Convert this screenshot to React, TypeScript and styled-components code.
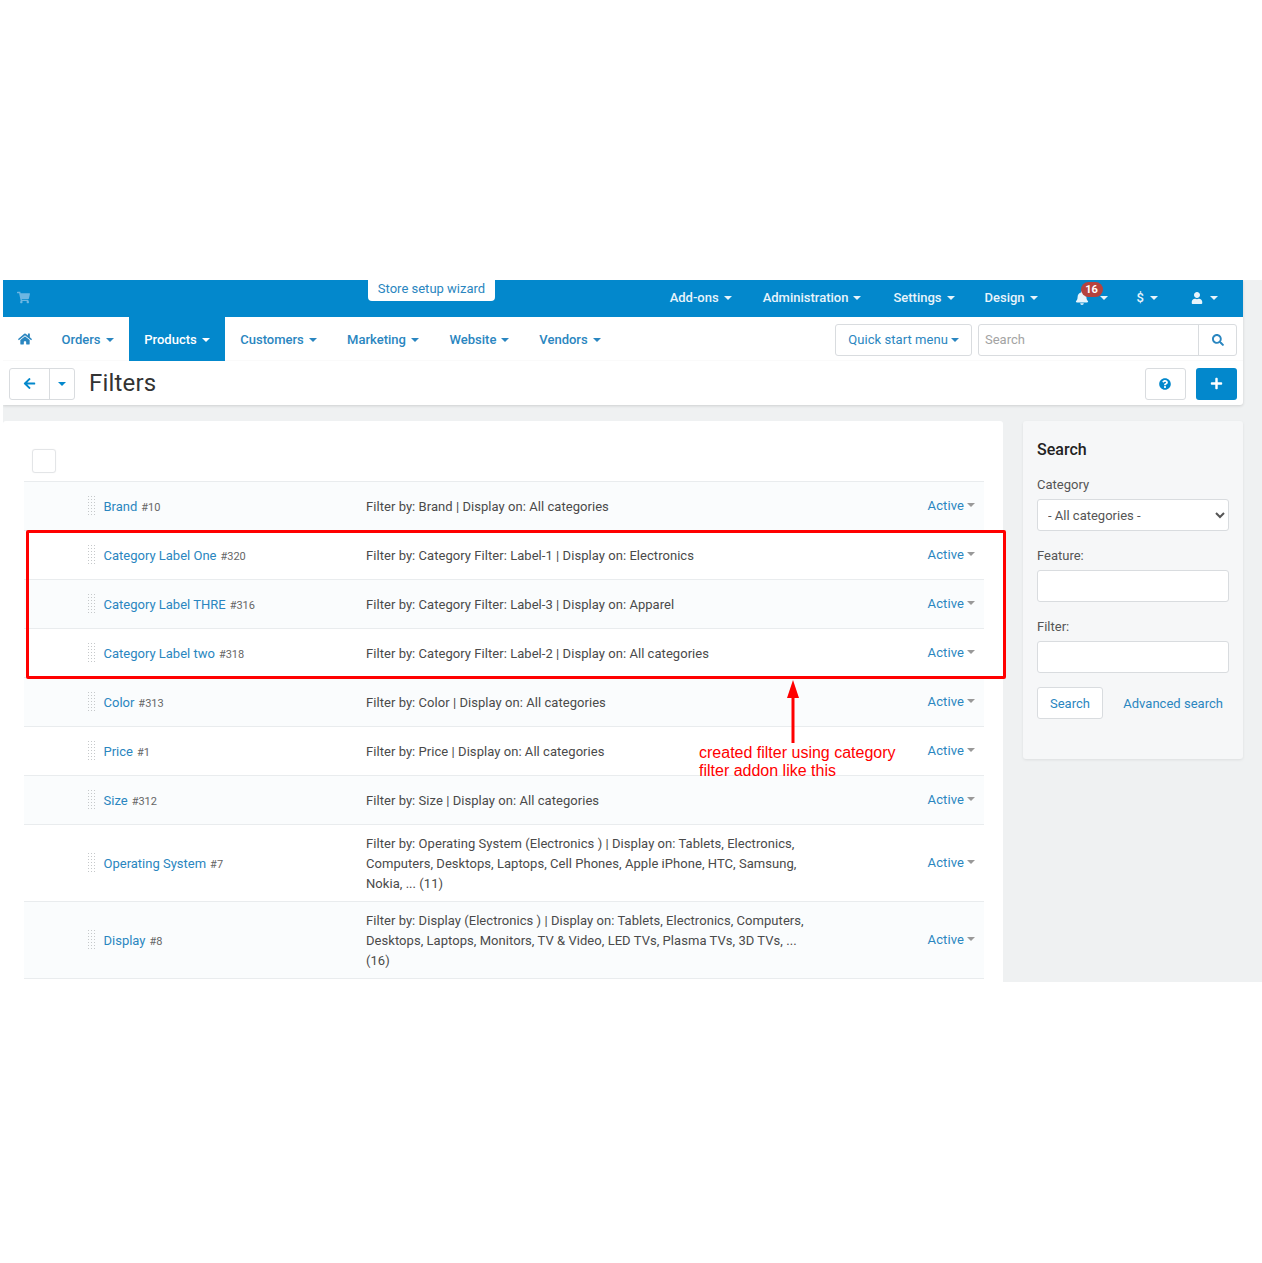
import React from "react";
import styled, { createGlobalStyle } from "styled-components";
import { FaShoppingCart, FaHome, FaArrowLeft, FaBell, FaUser, FaQuestionCircle, FaPlus, FaSearch } from "react-icons/fa";

const Global = createGlobalStyle`
  html, body { margin: 0; padding: 0; background: #fff; }
  body { min-height: 1263px; font-family: Roboto, "Liberation Sans", sans-serif; font-size: 13px; color: #444; }
  * { box-sizing: border-box; }
`;

const BLUE = "#0388cc";
const LINK = "#2a86c0";

const Frame = styled.div`
  margin: 280px 0 0 3px;
  height: 702px;
  overflow: hidden;
  background: #eff1f2;
`;
const Header = styled.header`
  width: 1240px;
  background: #fff;
  box-shadow: 0 1px 3px rgba(0,0,0,.14);
  border-radius: 0 0 3px 0;
`;
const TopBar = styled.div`
  height: 37px;
  padding-bottom: 2px;
  background: ${BLUE};
  display: flex;
  align-items: center;
  color: #fff;
  position: relative;
`;
const CartIcon = styled(FaShoppingCart)`
  margin-left: 14px;
  width: 13px;
  height: 13px;
  color: #6db6e2;
`;
const Wizard = styled.a`
  position: absolute;
  left: 365px;
  top: 0;
  width: 127px;
  height: 21px;
  background: #fff;
  color: ${LINK};
  border-radius: 0 0 4px 4px;
  text-align: center;
  font-size: 13px;
  line-height: 18px;
`;
const TopNav = styled.nav`
  margin-left: auto;
  display: flex;
  align-items: center;
  height: 100%;
  padding-right: 25px;
`;
const Caret = styled.i<{ $color?: string; $ml?: number; $up?: number }>`
  display: inline-block;
  width: 0;
  height: 0;
  margin-left: ${p => p.$ml ?? 5}px;
  margin-top: ${p => -(p.$up ?? 0)}px;
  vertical-align: middle;
  border-style: solid;
  border-width: 4px 4px 0;
  border-color: ${p => p.$color ?? "currentColor"} transparent transparent;
`;
const TopItem = styled.a<{ $ml: number }>`
  margin-left: ${p => p.$ml}px;
  font-weight: 500;
  font-size: 13px;
  color: #e8f4fb;
  white-space: nowrap;
  position: relative;
  display: flex;
  align-items: center;
`;
const Badge = styled.span`
  position: absolute;
  left: 6px;
  top: -9px;
  width: 22px;
  height: 15px;
  border-radius: 8px;
  background: #b5433f;
  color: #fff;
  font-size: 11px;
  font-weight: 700;
  line-height: 15px;
  text-align: center;
`;
const NavRow = styled.div`
  height: 44px;
  display: flex;
  align-items: center;
  position: relative;
  border-bottom: 1px solid #fafafa;
`;
const NavHome = styled(FaHome)`
  margin: 0 14px 0 15px;
  width: 14px;
  height: 14px;
  color: ${LINK};
`;
const NavItem = styled.a<{ $active?: boolean; $w: number }>`
  height: 44px;
  padding-top: 2px;
  width: ${p => p.$w}px;
  display: flex;
  align-items: center;
  justify-content: center;
  font-weight: 500;
  font-size: 13px;
  color: ${p => (p.$active ? "#fff" : LINK)};
  background: ${p => (p.$active ? BLUE : "transparent")};
`;
const NavRight = styled.div`
  margin-left: auto;
  margin-top: 2px;
  padding-right: 6px;
  display: flex;
  gap: 6px;
`;
const OutlineBtn = styled.a`
  height: 32px;
  padding: 0 12px;
  display: flex;
  align-items: center;
  background: #fff;
  border: 1px solid #d9dcdf;
  border-radius: 3px;
  color: ${LINK};
  font-size: 13px;
  white-space: nowrap;
`;
const QuickBtn = styled(OutlineBtn)`
  letter-spacing: .06px;
`;
const SearchBox = styled.div`
  width: 259px;
  height: 32px;
  display: flex;
  border: 1px solid #d9dcdf;
  border-radius: 3px;
`;
const SearchText = styled.span`
  flex: 1;
  padding-left: 6px;
  line-height: 30px;
  font-size: 13px;
  color: #a3a3a3;
`;
const SearchBtn = styled.span`
  width: 38px;
  border-left: 1px solid #d9dcdf;
  display: flex;
  align-items: center;
  justify-content: center;
  color: ${LINK};
  font-size: 12px;
`;
const TitleRow = styled.div`
  height: 44px;
  padding: 1px 6px 0;
  display: flex;
  align-items: center;
`;
const BackGroup = styled.div`
  width: 66px;
  height: 32px;
  display: flex;
  border: 1px solid #d9dcdf;
  border-radius: 3px;
  color: ${BLUE};
`;
const BackPart = styled.span<{ $w: number; $split?: boolean }>`
  width: ${p => p.$w}px;
  display: flex;
  align-items: center;
  justify-content: center;
  font-size: 13px;
  border-left: ${p => (p.$split ? "1px solid #d9dcdf" : "none")};
`;
const Title = styled.h1`
  margin: 0 0 2px 14px;
  font-size: 24px;
  font-weight: 400;
  color: #333;
  letter-spacing: .2px;
`;
const TitleActions = styled.div`
  margin-left: auto;
  display: flex;
  gap: 10px;
`;
const HelpBtn = styled.span`
  width: 41px;
  height: 32px;
  padding-right: 1px;
  border: 1px solid #d9dcdf;
  border-radius: 3px;
  display: flex;
  align-items: center;
  justify-content: center;
  color: ${BLUE};
  font-size: 12px;
`;
const AddBtn = styled.span`
  width: 41px;
  height: 32px;
  padding-right: 1px;
  border-radius: 3px;
  background: ${BLUE};
  color: #fff;
  display: flex;
  align-items: center;
  justify-content: center;
  font-size: 13px;
`;
const Content = styled.div`
  margin-top: 16px;
  display: flex;
  gap: 20px;
  align-items: flex-start;
  width: 1240px;
  position: relative;
`;
const Panel = styled.main`
  width: 1000px;
  height: 600px;
  background: #fff;
  padding: 0 19px 0 21px;
  border-radius: 3px;
`;
const ListHead = styled.div`
  height: 61px;
  padding: 28px 0 0 8px;
  border-bottom: 1px solid #e9ecee;
`;
const Check = styled.span`
  display: block;
  width: 24px;
  height: 24px;
  border: 1px solid #e3e5e7;
  border-radius: 3px;
  box-shadow: 0 0 1px rgba(0,0,0,.1);
`;
const Row = styled.div<{ $tint: boolean; $h: number }>`
  height: ${p => p.$h}px;
  display: flex;
  align-items: center;
  padding-left: 62.5px;
  background: ${p => (p.$tint ? "#fafcfd" : "#fff")};
  border-bottom: 1px solid #e9ecee;
`;
const Handle = styled.span`
  width: 8px;
  height: 20px;
  margin-right: 9px;
  margin-top: -2px;
  background-image: radial-gradient(circle, #c5c8ca 0.7px, transparent 0.8px);
  background-size: 3px 3px;
`;
const NameCell = styled.div`
  width: 262.5px;
  flex: none;
`;
const NameLink = styled.a`
  color: ${LINK};
  font-size: 13px;
`;
const NameId = styled.small`
  margin-left: 4px;
  color: #666;
  font-size: 11px;
`;
const Desc = styled.div`
  width: 450px;
  flex: none;
  margin-top: 2px;
  line-height: 20px;
  color: #4a4a4a;
  font-size: 13px;
  letter-spacing: .05px;
`;
const Status = styled.a`
  margin-left: auto;
  padding-right: 9px;
  margin-top: -1px;
  color: ${LINK};
  font-size: 13px;
  letter-spacing: .1px;
`;
const Side = styled.aside`
  width: 220px;
  height: 338px;
  padding: 19px 14px;
  background: #f6f7f8;
  border-radius: 3px;
  box-shadow: 0 1px 3px rgba(0,0,0,.08);
`;
const SideTitle = styled.h3`
  margin: 0 0 16px;
  font-size: 16px;
  line-height: 20px;
  font-weight: 500;
  color: #222;
`;
const Label = styled.div`
  font-size: 13px;
  line-height: 18px;
  margin-bottom: 5px;
  color: #555;
`;
const Field = styled.input`
  display: block;
  width: 192px;
  height: 32px;
  margin-bottom: 16px;
  border: 1px solid #d9dcdf;
  border-radius: 3px;
  background: #fff;
  &:last-of-type { margin-bottom: 14px; }
`;
const Select = styled.select`
  display: block;
  width: 192px;
  height: 32px;
  margin-bottom: 16px;
  padding-left: 6px;
  border: 1px solid #d9dcdf;
  border-radius: 3px;
  background: #fff;
  color: #555;
  font-family: Roboto, sans-serif;
  font-size: 13px;
`;
const SideActions = styled.div`
  display: flex;
  align-items: center;
  justify-content: space-between;
  color: ${LINK};
  width: 186px;
`;
const AdvLink = styled.a`
  color: ${LINK};
  font-size: 13px;
  letter-spacing: .02px;
`;
const RedBox = styled.div`
  position: absolute;
  left: 23px;
  top: 109px;
  width: 980px;
  height: 149px;
  border: 3px solid #f00;
  border-radius: 2px;
  pointer-events: none;
`;
const Arrow = styled.svg`
  position: absolute;
  left: 780px;
  top: 258px;
`;
const Note = styled.div`
  position: absolute;
  left: 696px;
  top: 323px;
  color: #f00;
  font-family: "Liberation Sans", Arial, sans-serif;
  font-size: 16px;
  line-height: 18px;
  white-space: nowrap;
`;

const rows = [
  ["Brand", "#10", "Filter by: Brand | Display on: All categories", 49],
  ["Category Label One", "#320", "Filter by: Category Filter: Label-1 | Display on: Electronics", 49],
  ["Category Label THRE", "#316", "Filter by: Category Filter: Label-3 | Display on: Apparel", 49],
  ["Category Label two", "#318", "Filter by: Category Filter: Label-2 | Display on: All categories", 49],
  ["Color", "#313", "Filter by: Color | Display on: All categories", 49],
  ["Price", "#1", "Filter by: Price | Display on: All categories", 49],
  ["Size", "#312", "Filter by: Size | Display on: All categories", 49],
  ["Operating System", "#7", "Filter by: Operating System (Electronics ) | Display on: Tablets, Electronics, Computers, Desktops, Laptops, Cell Phones, Apple iPhone, HTC, Samsung, Nokia, ... (11)", 77],
  ["Display", "#8", "Filter by: Display (Electronics ) | Display on: Tablets, Electronics, Computers, Desktops, Laptops, Monitors, TV & Video, LED TVs, Plasma TVs, 3D TVs, ... (16)", 77],
] as const;

const topItems = [
  ["Add-ons", 0],
  ["Administration", 31],
  ["Settings", 32],
  ["Design", 30],
] as const;

const mainNav = [
  ["Orders", 83, false],
  ["Products", 96, true],
  ["Customers", 107, false],
  ["Marketing", 102, false],
  ["Website", 91, false],
  ["Vendors", 90, false],
] as const;

export default function App() {
  return (
    <>
      <Global />
      <Frame>
        <Header>
          <TopBar>
            <CartIcon />
            <Wizard>Store setup wizard</Wizard>
            <TopNav>
              {topItems.map(([label, ml]) => (
                <TopItem key={label} $ml={ml}>
                  {label}
                  <Caret />
                </TopItem>
              ))}
              <TopItem $ml={37}>
                <FaBell size={14} />
                <Badge>16</Badge>
                <Caret $ml={11} />
              </TopItem>
              <TopItem $ml={29}>
                $<Caret $ml={6} />
              </TopItem>
              <TopItem $ml={33}>
                <FaUser size={12} />
                <Caret $ml={7} />
              </TopItem>
            </TopNav>
          </TopBar>
          <NavRow>
            <NavHome />
            {mainNav.map(([label, w, active]) => (
              <NavItem key={label} $w={w} $active={active}>
                {label}
                <Caret />
              </NavItem>
            ))}
            <NavRight>
              <QuickBtn>
                Quick start menu<Caret $ml={3} />
              </QuickBtn>
              <SearchBox>
                <SearchText>Search</SearchText>
                <SearchBtn>
                  <FaSearch />
                </SearchBtn>
              </SearchBox>
            </NavRight>
          </NavRow>
          <TitleRow>
            <BackGroup>
              <BackPart $w={39}>
                <FaArrowLeft />
              </BackPart>
              <BackPart $w={25} $split>
                <Caret $ml={0} />
              </BackPart>
            </BackGroup>
            <Title>Filters</Title>
            <TitleActions>
              <HelpBtn>
                <FaQuestionCircle />
              </HelpBtn>
              <AddBtn>
                <FaPlus />
              </AddBtn>
            </TitleActions>
          </TitleRow>
        </Header>
        <Content>
          <Panel>
            <ListHead>
              <Check />
            </ListHead>
            {rows.map(([name, id, desc, h], i) => (
              <Row key={name} $h={h} $tint={i % 2 === 0}>
                <Handle />
                <NameCell>
                  <NameLink>{name}</NameLink>
                  <NameId>{id}</NameId>
                </NameCell>
                <Desc>{desc}</Desc>
                <Status>
                  Active
                  <Caret $color="#999" $ml={3} $up={3} />
                </Status>
              </Row>
            ))}
          </Panel>
          <Side>
            <SideTitle>Search</SideTitle>
            <Label>Category</Label>
            <Select defaultValue="all">
              <option value="all">- All categories -</option>
            </Select>
            <Label>Feature:</Label>
            <Field />
            <Label>Filter:</Label>
            <Field />
            <SideActions>
              <OutlineBtn>Search</OutlineBtn>
              <AdvLink>Advanced search</AdvLink>
            </SideActions>
          </Side>
          <RedBox />
          <Arrow width="20" height="64" viewBox="0 0 20 64">
            <path d="M10 1 L16 19 H11.5 V64 H8.5 V19 H4 Z" fill="#f00" />
          </Arrow>
          <Note>
            created filter using category
            <br />
            filter addon like this
          </Note>
        </Content>
      </Frame>
    </>
  );
}
